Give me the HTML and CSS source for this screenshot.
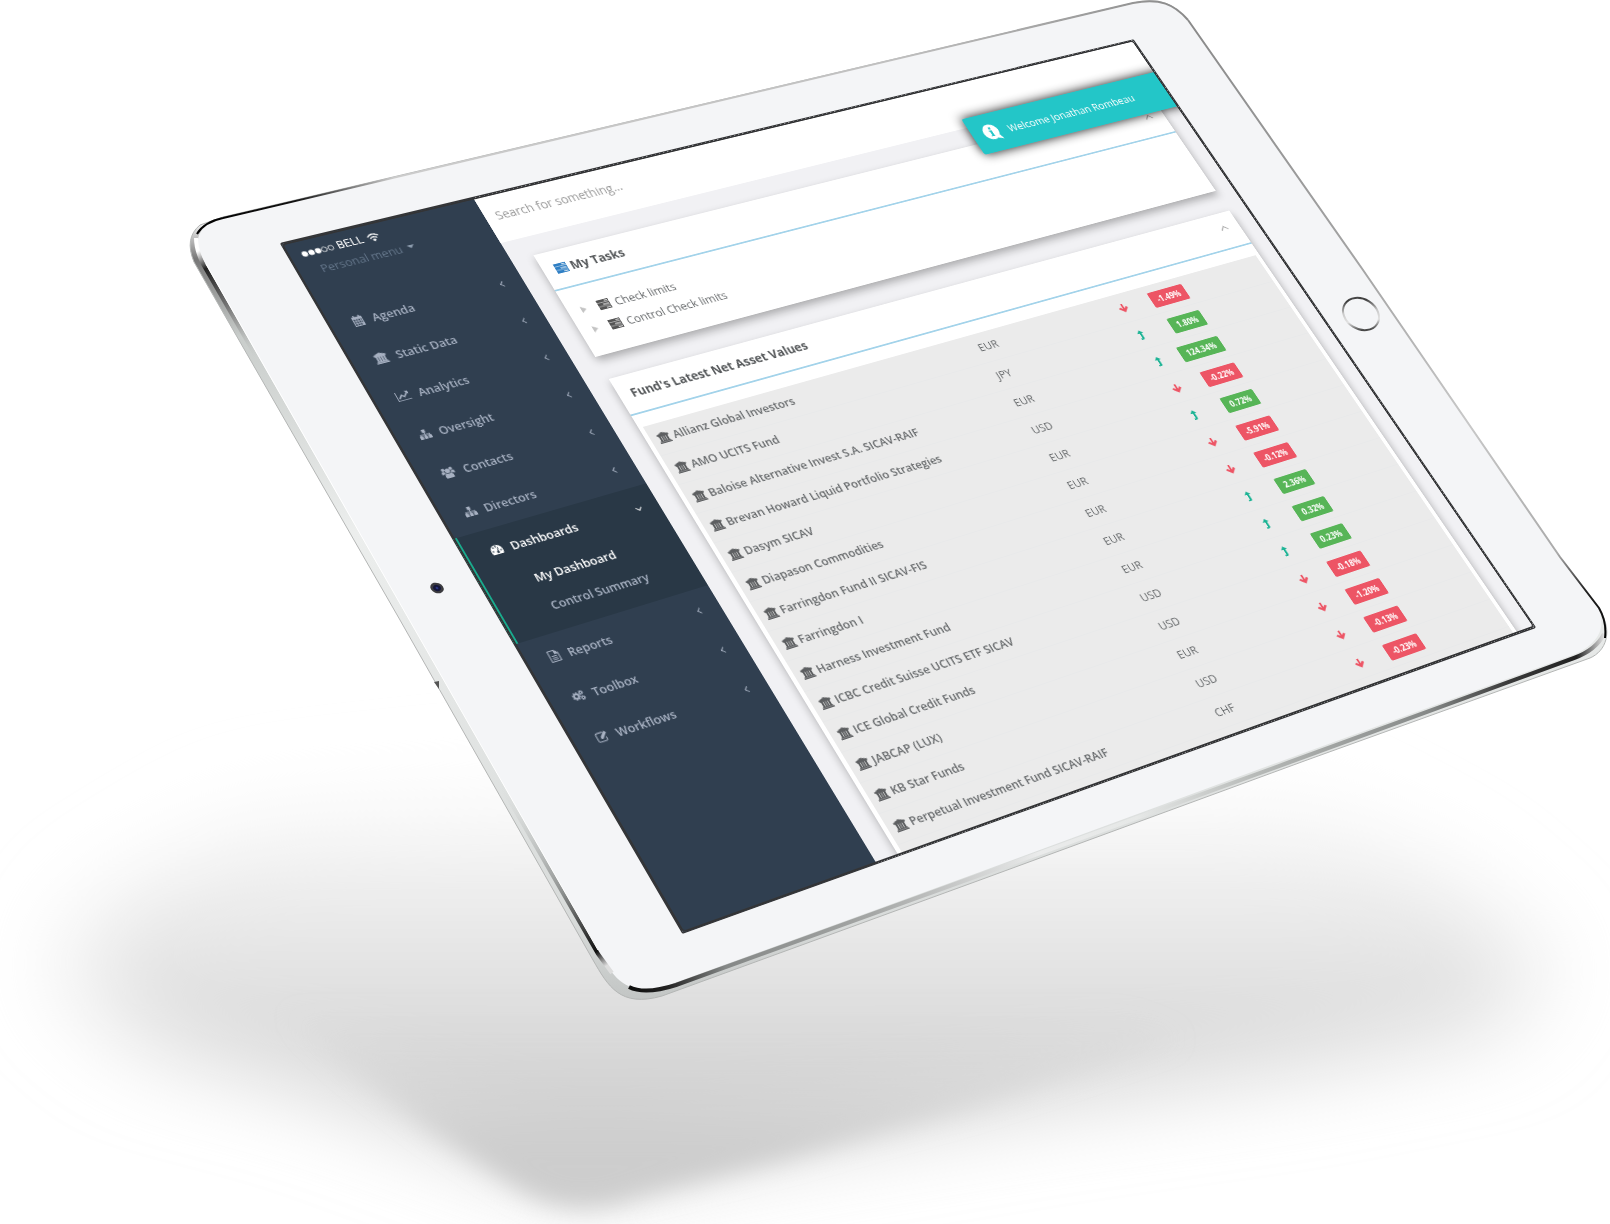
FILE: index.html
```html
<!DOCTYPE html>
<html lang="en">
<head>
<meta charset="utf-8">
<title>Fund dashboard on tablet</title>
<link rel="stylesheet" href="styles.css">
</head>
<body>
<svg class="sprite" aria-hidden="true">
  <symbol id="i-calendar" viewBox="0 0 14 14"><path fill-rule="evenodd" d="M1 2h2V1q0-1 1-1t1 1v1h4V1q0-1 1-1t1 1v1h2v12H1zM2 5v2h2V5zm3 0v2h2V5zm3 0v2h2V5zm3 0v2h1V5zM2 8v2h2V8zm3 0v2h2V8zm3 0v2h2V8zm3 0v2h1V8zM2 11v2h2v-2zm3 0v2h2v-2zm3 0v2h2v-2z"/></symbol>
  <symbol id="i-bank" viewBox="0 0 15 14"><path d="M7.500 0L15 3v1h-1v1H1V4H0V3zM2 5h2.300v6h.7V5h2.200v6h.6V5H10v6h.7V5H13v6h1v1H1v-1h1zM0 12.300h15V14H0z"/></symbol>
  <symbol id="i-chart" viewBox="0 0 16 14"><path d="M0 1h1v11h15v1H0zM15 2v4l-1.300-1.200L9 9.500l-2.500-2.500L3 10.500 2 9.200 6.500 4.700 9 7.200l3.500-3.600L11 2z"/></symbol>
  <symbol id="i-sitemap" viewBox="0 0 14 14"><path d="M5 1h4v4H7.500v2H13v2h1v4h-4V9h1.500V8h-4v1H9v4H5V9h1.500V8h-4v1H4v4H0V9h1V7h5.500V5H5z"/></symbol>
  <symbol id="i-users" viewBox="0 0 15 14"><circle cx="3" cy="3" r="2"/><circle cx="12" cy="3" r="2"/><circle cx="7.500" cy="5" r="2.800"/><path d="M0 9V6.500Q0 5 1.500 5L4 6l.5 2H3q-1 0-1.500 1zM15 9V6.500Q15 5 13.500 5L11 6l-.5 2H12q1 0 1.500 1zM2.500 13q0-5 2.500-5l2.500 1L10 8q2.500 0 2.500 5l-1 1h-8z"/></symbol>
  <symbol id="i-gauge" viewBox="0 0 14 12"><path fill-rule="evenodd" d="M1 12Q0 10 0 7.500A7 7 0 0 1 14 7.500Q14 10 13 12zM1.500 7h2v1.500h-2zm1.700-4l1.500-.4.200 1.600-1.500.3zM6.300 1.500h1.500v2H6.300zM10.500 7h2v1.500h-2zM8.800 3.500L7.500 7.500Q5.500 8 6 10q1.500 1.500 3 0 .5-1-.5-2.300L9.800 4z"/></symbol>
  <symbol id="i-file" viewBox="0 0 12 14"><path fill-rule="evenodd" d="M0 0h8l4 4v10H0zm1.200 1.200v11.600h9.600V5H7V1.200zM3 6.500h6v1H3zm0 2h6v1H3zm0 2h6v1H3z"/></symbol>
  <symbol id="i-cogs" viewBox="0 0 16 14"><g fill="none" stroke="currentColor"><circle cx="5.500" cy="7" r="3" stroke-width="2.400"/><circle cx="5.500" cy="7" r="4.700" stroke-width="1.500" stroke-dasharray="2 1.700"/><circle cx="12.800" cy="3.500" r="1.600" stroke-width="1.400"/><circle cx="12.800" cy="3.500" r="2.600" stroke-width="1" stroke-dasharray="1.200 1"/><circle cx="12.800" cy="10.800" r="1.600" stroke-width="1.400"/><circle cx="12.800" cy="10.800" r="2.600" stroke-width="1" stroke-dasharray="1.200 1"/></g></symbol>
  <symbol id="i-edit" viewBox="0 0 15 14"><path d="M10 2H3Q1 2 1 4v7q0 2 2 2h7q2 0 2-2V8.500" fill="none" stroke="currentColor" stroke-width="1.300"/><path d="M12 .8L14.500 3.300 8 9.800H5.500V7.300z"/></symbol>
  <symbol id="i-tasks" viewBox="0 0 14 12"><path fill-rule="evenodd" d="M0 0h14v3.600H0zM0 4h14v3.800H0zM0 8.200h14V12H0zM9 1.200v1h4v-1zM6 5.500v1h7v-1zM8 9.800v1h5v-1z"/></symbol>
  <symbol id="i-info" viewBox="0 0 26 26"><path fill-rule="evenodd" d="M12 1a11 11 0 0 1 9 17l3 7-7-3A11 11 0 1 1 12 1zM11 5.500v3h3v-3zM9.500 10v1.500H11V17H9.500v1.500h5V17H14v-7z"/></symbol>
  <symbol id="i-up" viewBox="0 0 8 12"><path d="M4 0l4 4H5.500v7L4 12H1v-1.800h2V4H0z"/></symbol>
  <symbol id="i-down" viewBox="0 0 13 12"><path d="M5.200 0h2.600v6.500l3-2.500L13 6l-6.500 6L0 6l2.200-2 3 2.500z"/></symbol>
</svg>

<main class="stage">
  <svg class="tablet" viewBox="0 0 1610 1224" aria-hidden="true">
    <defs>
      <linearGradient id="shade" gradientUnits="userSpaceOnUse" x1="0" y1="740" x2="0" y2="1200">
        <stop offset="0" stop-color="#fff" stop-opacity="0"/><stop offset=".27" stop-color="#f0f0f0"/><stop offset=".45" stop-color="#e6e6e6"/><stop offset=".65" stop-color="#dadada"/><stop offset="1" stop-color="#cccccc"/>
      </linearGradient>
      <linearGradient id="tipFade" gradientUnits="userSpaceOnUse" x1="0" y1="1010" x2="0" y2="1150">
        <stop offset="0" stop-color="#d6d6d6" stop-opacity="0"/><stop offset="1" stop-color="#cdcdcd"/>
      </linearGradient>
      <filter id="soft" filterUnits="userSpaceOnUse" x="-200" y="600" width="2000" height="800"><feGaussianBlur stdDeviation="50 42"/></filter>
      <filter id="tight" filterUnits="userSpaceOnUse" x="200" y="900" width="1100" height="400"><feGaussianBlur stdDeviation="12"/></filter>
      <linearGradient id="side" gradientUnits="userSpaceOnUse" x1="0" y1="220" x2="0" y2="1000">
        <stop offset="0" stop-color="#fff"/><stop offset=".05" stop-color="#777"/><stop offset=".15" stop-color="#c9cdcb"/><stop offset=".4" stop-color="#eceeed"/><stop offset=".9" stop-color="#d8dbda"/><stop offset="1" stop-color="#c2c5c4"/>
      </linearGradient>
      <linearGradient id="bottomBand" gradientUnits="userSpaceOnUse" x1="628" y1="0" x2="1606" y2="0">
        <stop offset="0" stop-color="#0c0c0c"/><stop offset=".04" stop-color="#222"/><stop offset=".1" stop-color="#858887"/><stop offset=".25" stop-color="#a5a7a6"/><stop offset=".42" stop-color="#eaebeb"/><stop offset=".52" stop-color="#e6e8e7"/><stop offset=".65" stop-color="#b4b7b5"/><stop offset=".82" stop-color="#858887"/><stop offset=".9" stop-color="#3a3a3a"/><stop offset=".97" stop-color="#222"/><stop offset="1" stop-color="#eee"/>
      </linearGradient>
      <linearGradient id="lowLeft" gradientUnits="userSpaceOnUse" x1="500" y1="780" x2="606" y2="966">
        <stop offset="0" stop-color="#dfe2e1" stop-opacity="0"/><stop offset=".6" stop-color="#8d908f"/><stop offset=".92" stop-color="#111"/><stop offset="1" stop-color="#ddd"/>
      </linearGradient>
      <linearGradient id="topLeft" gradientUnits="userSpaceOnUse" x1="200" y1="250" x2="262" y2="360">
        <stop offset="0" stop-color="#fff"/><stop offset=".15" stop-color="#222"/><stop offset=".5" stop-color="#777"/><stop offset="1" stop-color="#d5d8d7" stop-opacity="0"/>
      </linearGradient>
      <linearGradient id="topEdge" gradientUnits="userSpaceOnUse" x1="195" y1="0" x2="1190" y2="0">
        <stop offset="0" stop-color="#000"/><stop offset=".1" stop-color="#111"/><stop offset=".2" stop-color="#ccc"/><stop offset=".7" stop-color="#c0c0c0"/><stop offset="1" stop-color="#8a8a8a"/>
      </linearGradient>
      <linearGradient id="rightEdge" gradientUnits="userSpaceOnUse" x1="0" y1="20" x2="0" y2="640">
        <stop offset="0" stop-color="#8a8a8a"/><stop offset=".4" stop-color="#a5a5a5"/><stop offset=".65" stop-color="#c8c8c8"/><stop offset=".86" stop-color="#aaa"/><stop offset=".92" stop-color="#222"/><stop offset="1" stop-color="#000"/>
      </linearGradient>
      <linearGradient id="ring" x1="0" y1="0" x2="1" y2="1">
        <stop offset="0" stop-color="#666"/><stop offset=".2" stop-color="#3c3c3c"/><stop offset=".45" stop-color="#c9c9c9"/><stop offset=".65" stop-color="#e2e2e2"/><stop offset=".85" stop-color="#444"/><stop offset="1" stop-color="#999"/>
      </linearGradient>
    </defs>
    <path filter="url(#soft)" fill="url(#shade)" d="M100 910L70 980L150 1050L320 1095L470 1150L575 1190L780 1150L1050 1105L1300 1070L1500 1030L1540 960L1450 880L1280 780H500L260 810z"/>
    <path filter="url(#tight)" fill="url(#tipFade)" d="M280 1010L350 1070L430 1130L520 1190Q575 1222 640 1196L780 1160L980 1105L1180 1040L1100 1000z"/>
    <path fill="url(#side)" stroke="#b4b6b5" d="M194 262Q184 238 200 225L223 217L1133 3C1160-3 1174 4 1188 20L1363 270L1560 557L1600 610C1613 632 1606 651 1590 658L1307 760L980 880L662 996C620 1008 608 986 593 960L400 620z"/>
    <path fill="#f4f5f7" d="M203 260L597 948C612 975 622 993 655 989Q665 987 680 981L980 872L1290 758L1570 656C1592 648 1609 632 1598 608L1560 557L1363 270L1188 20C1174 4 1160-2 1133 4L223 219C198 225 192 240 203 260z"/>
    <g fill="none">
      <path stroke="url(#bottomBand)" stroke-width="4" d="M629 987Q645 995 676 985L980 875L1290 762L1574 658Q1596 650 1604 634"/>
      <path stroke="url(#lowLeft)" stroke-width="4" d="M500 784L598 954L612 973"/>
      <path stroke="url(#topLeft)" stroke-width="4" d="M196 238Q196 250 203 264L258 360"/>
      <path stroke="url(#topEdge)" stroke-width="2" d="M197 234Q204 222 223 218L1133 3C1160-2 1174 4 1188 20"/>
      <path stroke="url(#rightEdge)" stroke-width="2" d="M1188 20L1363 270L1560 557L1599 608Q1607 622 1605 638"/>
      <path stroke="#fff" d="M206 264L598 950"/>
      <ellipse cx="1361" cy="314" rx="19" ry="15" transform="rotate(32 1361 314)" stroke="url(#ring)" stroke-width="2"/>
    </g>
    <path fill="#333436" stroke="#333436" stroke-width="3" stroke-linejoin="round" d="M282 244L1133 41L1534 627L683 932z"/>
    <path fill="#555" d="M434 682l5-1v8z"/>
    <g transform="rotate(22 437 588)"><ellipse cx="437" cy="588" rx="7" ry="5" fill="#3b3b3f"/><ellipse cx="437" cy="588" rx="4" ry="3" fill="#14163a"/><ellipse cx="437" cy="588" rx="1.500" ry="1" fill="#2a3480"/></g>
  </svg>

  <div class="screen">
    <aside class="sidebar">
      <div class="status">
        <svg class="signal" viewBox="0 0 34 8"><g fill="#fff"><circle cx="3.500" cy="4" r="3"/><circle cx="10.500" cy="4" r="3"/><circle cx="17.500" cy="4" r="3"/></g><g fill="none" stroke="#fff" stroke-width=".8"><circle cx="24" cy="4" r="2.700"/><circle cx="31" cy="4" r="2.700"/></g></svg>
        <span>BELL</span>
        <svg class="wifi" viewBox="0 0 14 11"><g fill="none" stroke="#fff" stroke-width="1.500"><path d="M1 4Q7-1.500 13 4M3.200 6.400Q7 3 10.800 6.400"/></g><path fill="#fff" d="M4.800 8Q7 6.300 9.200 8L7 10.600z"/></svg>
      </div>
      <button class="personal" type="button">Personal menu <i class="caret"></i></button>
      <nav>
        <ul class="menu">
          <li><a href="#"><svg><use href="#i-calendar"/></svg>Agenda<i class="chev"></i></a></li>
          <li><a href="#"><svg class="wide"><use href="#i-bank"/></svg>Static Data<i class="chev"></i></a></li>
          <li><a href="#"><svg class="wide"><use href="#i-chart"/></svg>Analytics<i class="chev"></i></a></li>
          <li><a href="#"><svg><use href="#i-sitemap"/></svg>Oversight<i class="chev"></i></a></li>
          <li><a href="#"><svg class="wide"><use href="#i-users"/></svg>Contacts<i class="chev"></i></a></li>
          <li><a href="#"><svg><use href="#i-sitemap"/></svg>Directors<i class="chev"></i></a></li>
          <li class="active"><a href="#"><svg><use href="#i-gauge"/></svg>Dashboards<i class="chev open"></i></a>
            <ul class="submenu">
              <li class="current"><a href="#">My Dashboard</a></li>
              <li><a href="#">Control Summary</a></li>
            </ul>
          </li>
          <li><a href="#"><svg class="slim"><use href="#i-file"/></svg>Reports<i class="chev"></i></a></li>
          <li><a href="#"><svg><use href="#i-cogs"/></svg>Toolbox<i class="chev"></i></a></li>
          <li><a href="#"><svg><use href="#i-edit"/></svg>Workflows<i class="chev"></i></a></li>
        </ul>
      </nav>
    </aside>

    <div class="content">
      <header class="topbar"><input class="search" type="text" aria-label="Search" placeholder="Search for something..."></header>
      <div class="panels">
        <section class="panel">
          <div class="panel-head"><svg class="blue"><use href="#i-tasks"/></svg><h2>My Tasks</h2><i class="chev up"></i></div>
          <ul class="tree">
            <li><i class="tri"></i><svg><use href="#i-tasks"/></svg>Check limits</li>
            <li><i class="tri"></i><svg><use href="#i-tasks"/></svg>Control Check limits</li>
          </ul>
        </section>
        <section class="panel">
          <div class="panel-head"><h2>Fund's Latest Net Asset Values</h2><i class="chev up"></i></div>
          <div class="table-wrap">
          <div class="table-body">
          <table>
            <colgroup><col class="c-name"><col class="c-cur"><col class="c-dir"><col class="c-val"><col></colgroup>
            <tbody>
              <tr><th scope="row"><svg><use href="#i-bank"/></svg>Allianz Global Investors</th><td>EUR</td><td class="down"><svg><use href="#i-down"/></svg></td><td class="val"><span class="badge red">-1.49%</span></td><td></td></tr>
              <tr><th scope="row"><svg><use href="#i-bank"/></svg>AMO UCITS Fund</th><td>JPY</td><td class="up-dir"><svg><use href="#i-up"/></svg></td><td class="val"><span class="badge">1.80%</span></td><td></td></tr>
              <tr><th scope="row"><svg><use href="#i-bank"/></svg>Baloise Alternative Invest S.A. SICAV-RAIF</th><td>EUR</td><td class="up-dir"><svg><use href="#i-up"/></svg></td><td class="val"><span class="badge">124.34%</span></td><td></td></tr>
              <tr><th scope="row"><svg><use href="#i-bank"/></svg>Brevan Howard Liquid Portfolio Strategies</th><td>USD</td><td class="down"><svg><use href="#i-down"/></svg></td><td class="val"><span class="badge red">-0.22%</span></td><td></td></tr>
              <tr><th scope="row"><svg><use href="#i-bank"/></svg>Dasym SICAV</th><td>EUR</td><td class="up-dir"><svg><use href="#i-up"/></svg></td><td class="val"><span class="badge">0.72%</span></td><td></td></tr>
              <tr><th scope="row"><svg><use href="#i-bank"/></svg>Diapason Commodities</th><td>EUR</td><td class="down"><svg><use href="#i-down"/></svg></td><td class="val"><span class="badge red">-5.91%</span></td><td></td></tr>
              <tr><th scope="row"><svg><use href="#i-bank"/></svg>Farringdon Fund II SICAV-FIS</th><td>EUR</td><td class="down"><svg><use href="#i-down"/></svg></td><td class="val"><span class="badge red">-0.12%</span></td><td></td></tr>
              <tr><th scope="row"><svg><use href="#i-bank"/></svg>Farringdon I</th><td>EUR</td><td class="up-dir"><svg><use href="#i-up"/></svg></td><td class="val"><span class="badge">2.36%</span></td><td></td></tr>
              <tr><th scope="row"><svg><use href="#i-bank"/></svg>Harness Investment Fund</th><td>EUR</td><td class="up-dir"><svg><use href="#i-up"/></svg></td><td class="val"><span class="badge">0.32%</span></td><td></td></tr>
              <tr><th scope="row"><svg><use href="#i-bank"/></svg>ICBC Credit Suisse UCITS ETF SICAV</th><td>USD</td><td class="up-dir"><svg><use href="#i-up"/></svg></td><td class="val"><span class="badge">0.23%</span></td><td></td></tr>
              <tr><th scope="row"><svg><use href="#i-bank"/></svg>ICE Global Credit Funds</th><td>USD</td><td class="down"><svg><use href="#i-down"/></svg></td><td class="val"><span class="badge red">-0.18%</span></td><td></td></tr>
              <tr><th scope="row"><svg><use href="#i-bank"/></svg>JABCAP (LUX)</th><td>EUR</td><td class="down"><svg><use href="#i-down"/></svg></td><td class="val"><span class="badge red">-1.20%</span></td><td></td></tr>
              <tr><th scope="row"><svg><use href="#i-bank"/></svg>KB Star Funds</th><td>USD</td><td class="down"><svg><use href="#i-down"/></svg></td><td class="val"><span class="badge red">-0.13%</span></td><td></td></tr>
              <tr><th scope="row"><svg><use href="#i-bank"/></svg>Perpetual Investment Fund SICAV-RAIF</th><td>CHF</td><td class="down"><svg><use href="#i-down"/></svg></td><td class="val"><span class="badge red">-0.23%</span></td><td></td></tr>
            </tbody>
          </table>
          </div>
          </div>
        </section>
      </div>
    </div>
    <div class="toast" role="status"><svg><use href="#i-info"/></svg>Welcome Jonathan Rombeau</div>
    <div class="frame"></div>
  </div>
</main>
</body>
</html>
```
FILE: styles.css
```css
* { box-sizing: border-box; }
body { margin: 0; background: #fff; overflow-x: hidden; font-family: "Open Sans", Roboto, sans-serif; font-size: 13px; line-height: 20px; color: #676a6c; }
ul { list-style: none; margin: 0; padding: 0; }
a { color: inherit; text-decoration: none; }
svg { fill: currentColor; }
.sprite { position: absolute; width: 0; height: 0; }

.stage { position: relative; }
.tablet { display: block; width: 1610px; height: auto; }

/* The flat dashboard is projected onto the tilted glass of the tablet. */
.screen {
  position: absolute; top: 0; left: 0;
  display: flex; width: 1080px; height: 818px; overflow: hidden;
  background: #f1f1f4; border-radius: 4px;
  transform-origin: 0 0;
  transform: matrix3d(0.935194, -0.183722, 0, 0.00012913, 0.436504, 0.767249, 0, -0.00008044, 0, 0, 1, 0, 281, 244, 0, 1);
  will-change: transform;
}
.frame { position: absolute; inset: 0; border: 2px solid #333436; border-radius: 4px; pointer-events: none; }

.sidebar { flex: 0 0 220px; background: #303f50; color: #a7b1c2; padding-top: 7px; }
.status { display: flex; align-items: center; gap: 4px; height: 20px; padding-left: 14px; color: #fff; font-family: Roboto, sans-serif; font-size: 13px; }
.signal { width: 36px; height: 9px; }
.wifi { width: 14px; height: 11px; }
.personal { display: flex; align-items: center; gap: 6px; border: 0; background: none; padding: 0 25px; margin: 1px 0 34px; color: #64768a; font: inherit; line-height: 20px; }
.caret { border: 4px solid transparent; border-top-color: #8b9bad; border-bottom: 0; }
.menu a { display: flex; align-items: center; height: 47px; padding: 0 20px 0 25px; font-weight: 600; }
.menu svg { width: 13px; height: 13px; margin-right: 9px; }
.menu .wide { width: 15px; }
.menu .slim { width: 12px; }
.chev { width: 5px; height: 5px; margin-left: auto; border: solid currentColor; border-width: 0 0 1px 1px; transform: rotate(45deg); }
.chev.open { transform: rotate(-45deg); }
.chev.up { width: 7px; height: 7px; margin-right: 17px; border-color: #9a9a9a; transform: rotate(135deg); }
.menu .active { background: #293846; border-left: 4px solid #19aa8d; padding-bottom: 12px; }
.active > a { color: #fff; }
.menu .submenu a { height: 33px; padding-left: 52px; }
.submenu .current { color: #fff; }

.content { flex: 1; min-width: 0; }
.topbar { height: 59px; padding: 12px; background: #fff; }
.search { width: 300px; height: 28px; border: 0; padding: 0; background: none; font: inherit; font-size: 14px; }
.search::placeholder { color: #9a9a9a; opacity: 1; }
.panels { display: flex; flex-direction: column; gap: 28px; padding: 23px 25px 0 26px; }
.panel { background: #fff; box-shadow: 0 5px 10px rgba(0, 0, 0, .3); }
.panel-head { display: flex; align-items: center; height: 47px; padding: 0 0 2px 14px; border-bottom: 2px solid #a3d3ea; }
.panel-head h2 { margin: 0; font-size: 14px; font-weight: 700; color: #55585a; }
.blue { width: 14px; height: 12px; margin-right: 4px; color: #2f7fc4; }
.tree { padding: 15px 15px 19px; }
.tree li { display: flex; align-items: center; height: 25px; }
.tree svg { width: 14px; height: 12px; margin: 0 6px 0 14px; color: #555; }
.tri { border: 4px solid transparent; border-left: 6px solid #c4c4c4; border-right: 0; }
.table-wrap { padding: 15px 5px 0; }
.table-body { padding-bottom: 40px; background: #ebebeb; }
table { width: 100%; border-collapse: collapse; table-layout: fixed; }
th, td { height: 36px; padding: 0 8px 1px; border-bottom: 1px solid #e8e9ea; text-align: left; white-space: nowrap; }
th { font-weight: 600; }
th svg { width: 14px; height: 13px; margin-right: 4px; vertical-align: -2px; color: #5d5f61; }
.c-name { width: 50%; }
.c-cur { width: 23%; }
.c-dir { width: 5%; }
.c-val { width: 9%; }
.down, .up-dir { padding-right: 12px; text-align: center; }
.down svg { width: 12px; height: 11px; color: #ed5565; vertical-align: middle; }
.up-dir svg { width: 8px; height: 12px; color: #1ab394; vertical-align: middle; }
.val { padding-bottom: 0; text-align: right; }
.badge { display: inline-block; padding: 0 8px; border-radius: 2px; background: #57b557; color: #fff; font-size: 10px; font-weight: 700; line-height: 20px; vertical-align: middle; }
.badge.red { background: #ed5565; }
.toast { position: absolute; top: 47px; right: -12px; display: flex; align-items: center; width: 283px; height: 50px; padding-left: 14px; border-radius: 3px; background: #23c6c8; color: #fff; box-shadow: 0 0 14px rgba(0, 0, 0, .9); }
.toast svg { width: 24px; height: 24px; margin-right: 10px; }
```
